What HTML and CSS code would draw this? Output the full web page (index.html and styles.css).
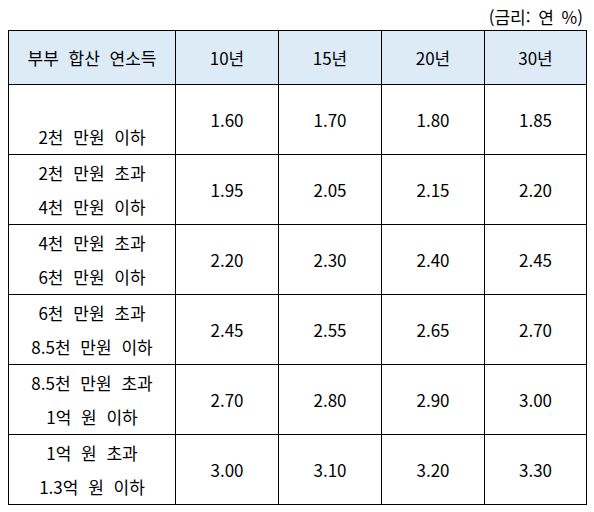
FILE: index.html
```html
<!DOCTYPE html>
<html lang="ko">
<head>
<meta charset="utf-8">
<link rel="stylesheet" href="styles.css">
</head>
<body>
<div class="page">
  <div class="unit">(금리: 연 %)</div>
  <table class="rates">
    <colgroup>
      <col class="c-income">
      <col class="c-year">
      <col class="c-year">
      <col class="c-year">
      <col class="c-last">
    </colgroup>
    <thead>
      <tr>
        <th>부부 합산 연소득</th>
        <th>10년</th>
        <th>15년</th>
        <th>20년</th>
        <th>30년</th>
      </tr>
    </thead>
    <tbody>
      <tr>
        <td class="label"><br>2천 만원 이하</td>
        <td>1.60</td><td>1.70</td><td>1.80</td><td>1.85</td>
      </tr>
      <tr>
        <td class="label">2천 만원 초과<br>4천 만원 이하</td>
        <td>1.95</td><td>2.05</td><td>2.15</td><td>2.20</td>
      </tr>
      <tr>
        <td class="label">4천 만원 초과<br>6천 만원 이하</td>
        <td>2.20</td><td>2.30</td><td>2.40</td><td>2.45</td>
      </tr>
      <tr>
        <td class="label">6천 만원 초과<br>8.5천 만원 이하</td>
        <td>2.45</td><td>2.55</td><td>2.65</td><td>2.70</td>
      </tr>
      <tr>
        <td class="label">8.5천 만원 초과<br>1억 원 이하</td>
        <td>2.70</td><td>2.80</td><td>2.90</td><td>3.00</td>
      </tr>
      <tr>
        <td class="label">1억 원 초과<br>1.3억 원 이하</td>
        <td>3.00</td><td>3.10</td><td>3.20</td><td>3.30</td>
      </tr>
    </tbody>
  </table>
</div>
</body>
</html>
```
FILE: styles.css
```css
html, body {
  margin: 0;
  padding: 0;
  background: #ffffff;
}
body {
  font-family: "Noto Sans CJK KR", "Noto Sans", sans-serif;
  font-size: 17px;
  color: #000000;
}
.page {
  padding: 0 0 0 8px;
}
.unit {
  width: 579px;
  height: 30px;
  line-height: 34px;
  text-align: right;
  box-sizing: border-box;
  padding-right: 4px;
  word-spacing: 3px;
}
.rates {
  border-collapse: collapse;
  table-layout: fixed;
  width: 579px;
}
.c-income { width: 167px; }
.c-year { width: 103px; }
.c-last { width: 102px; }
.rates th,
.rates td {
  border: 1px solid #000000;
  padding: 0;
  text-align: center;
  vertical-align: middle;
  font-weight: normal;
  line-height: 34px;
}
.rates th {
  background: #ddebf7;
  height: 53px;
}
.rates th:first-child {
  word-spacing: 5px;
}
.rates td {
  height: 69px;
}
.rates td.label {
  word-spacing: 5px;
}
```
